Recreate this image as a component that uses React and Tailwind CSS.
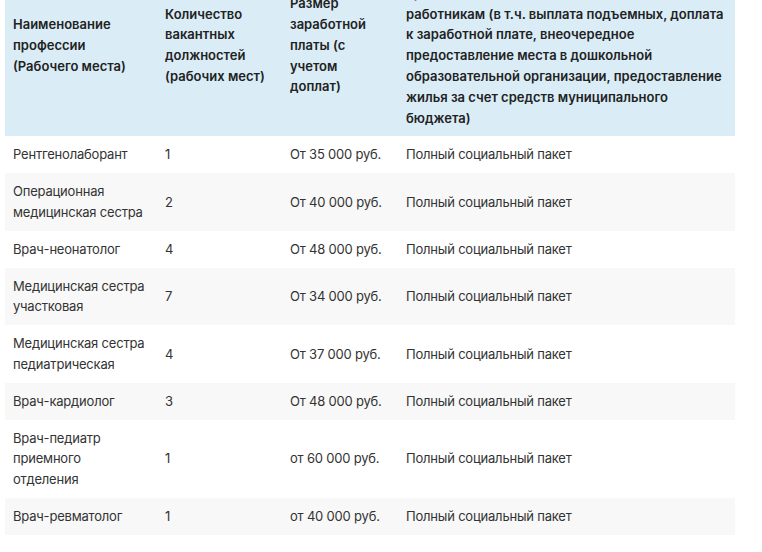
import React from "react";

const rows = [
  { name: "Рентгенолаборант", count: "1", salary: "От 35 000 руб." },
  { name: "Операционная медицинская сестра", count: "2", salary: "От 40 000 руб." },
  { name: "Врач-неонатолог", count: "4", salary: "От 48 000 руб." },
  { name: "Медицинская сестра участковая", count: "7", salary: "От 34 000 руб." },
  { name: "Медицинская сестра педиатрическая", count: "4", salary: "От 37 000 руб." },
  { name: "Врач-кардиолог", count: "3", salary: "От 48 000 руб." },
  { name: "Врач-педиатр приемного отделения", count: "1", salary: "от 60 000 руб." },
  { name: "Врач-ревматолог", count: "1", salary: "от 40 000 руб." },
];

const supportLines = [
  "Меры социальной поддержки,",
  "предоставляемые медицинским",
  "работникам (в т.ч. выплата подъемных, доплата",
  "к заработной плате, внеочередное",
  "предоставление места в дошкольной",
  "образовательной организации, предоставление",
  "жилья за счет средств муниципального",
  "бюджета)",
];

const App = () => {
  return (
    <div
      className="w-[762px] h-[552px] overflow-hidden bg-white"
      style={{ fontFamily: "Inter, 'Noto Sans', sans-serif" }}
    >
      <table className="ml-[5px] -mt-[46px] w-[730px] table-fixed border-collapse text-[13px] leading-[20.8px]">
        <colgroup>
          <col className="w-[152px]" />
          <col className="w-[125px]" />
          <col className="w-[116px]" />
          <col className="w-[337px]" />
        </colgroup>
        <thead>
          <tr className="bg-[#daedf7] text-[#222]">
            <th className="text-left align-middle px-2 py-2 font-semibold">
              Наименование профессии (Рабочего места)
            </th>
            <th className="text-left align-middle px-2 py-2 font-semibold">
              Количество вакантных должностей (рабочих мест)
            </th>
            <th className="text-left align-middle px-2 py-2 font-semibold">
              Размер заработной платы (с учетом доплат)
            </th>
            <th className="text-left align-middle px-2 py-2 font-semibold">
              {supportLines.map((l, i) => (
                <div key={i} className="whitespace-nowrap">
                  {l}
                </div>
              ))}
            </th>
          </tr>
        </thead>
        <tbody className="text-[#333] tracking-[-0.2px]">
          {rows.map((r, i) => (
            <tr key={i} className={i % 2 === 1 ? "bg-[#f8f8f8]" : "bg-white"}>
              <td className="align-middle px-2 py-2">{r.name}</td>
              <td className="align-middle px-2 py-2">{r.count}</td>
              <td className="align-middle px-2 py-2">{r.salary}</td>
              <td className="align-middle px-2 py-2">Полный социальный пакет</td>
            </tr>
          ))}
        </tbody>
      </table>
    </div>
  );
};

export default App;
